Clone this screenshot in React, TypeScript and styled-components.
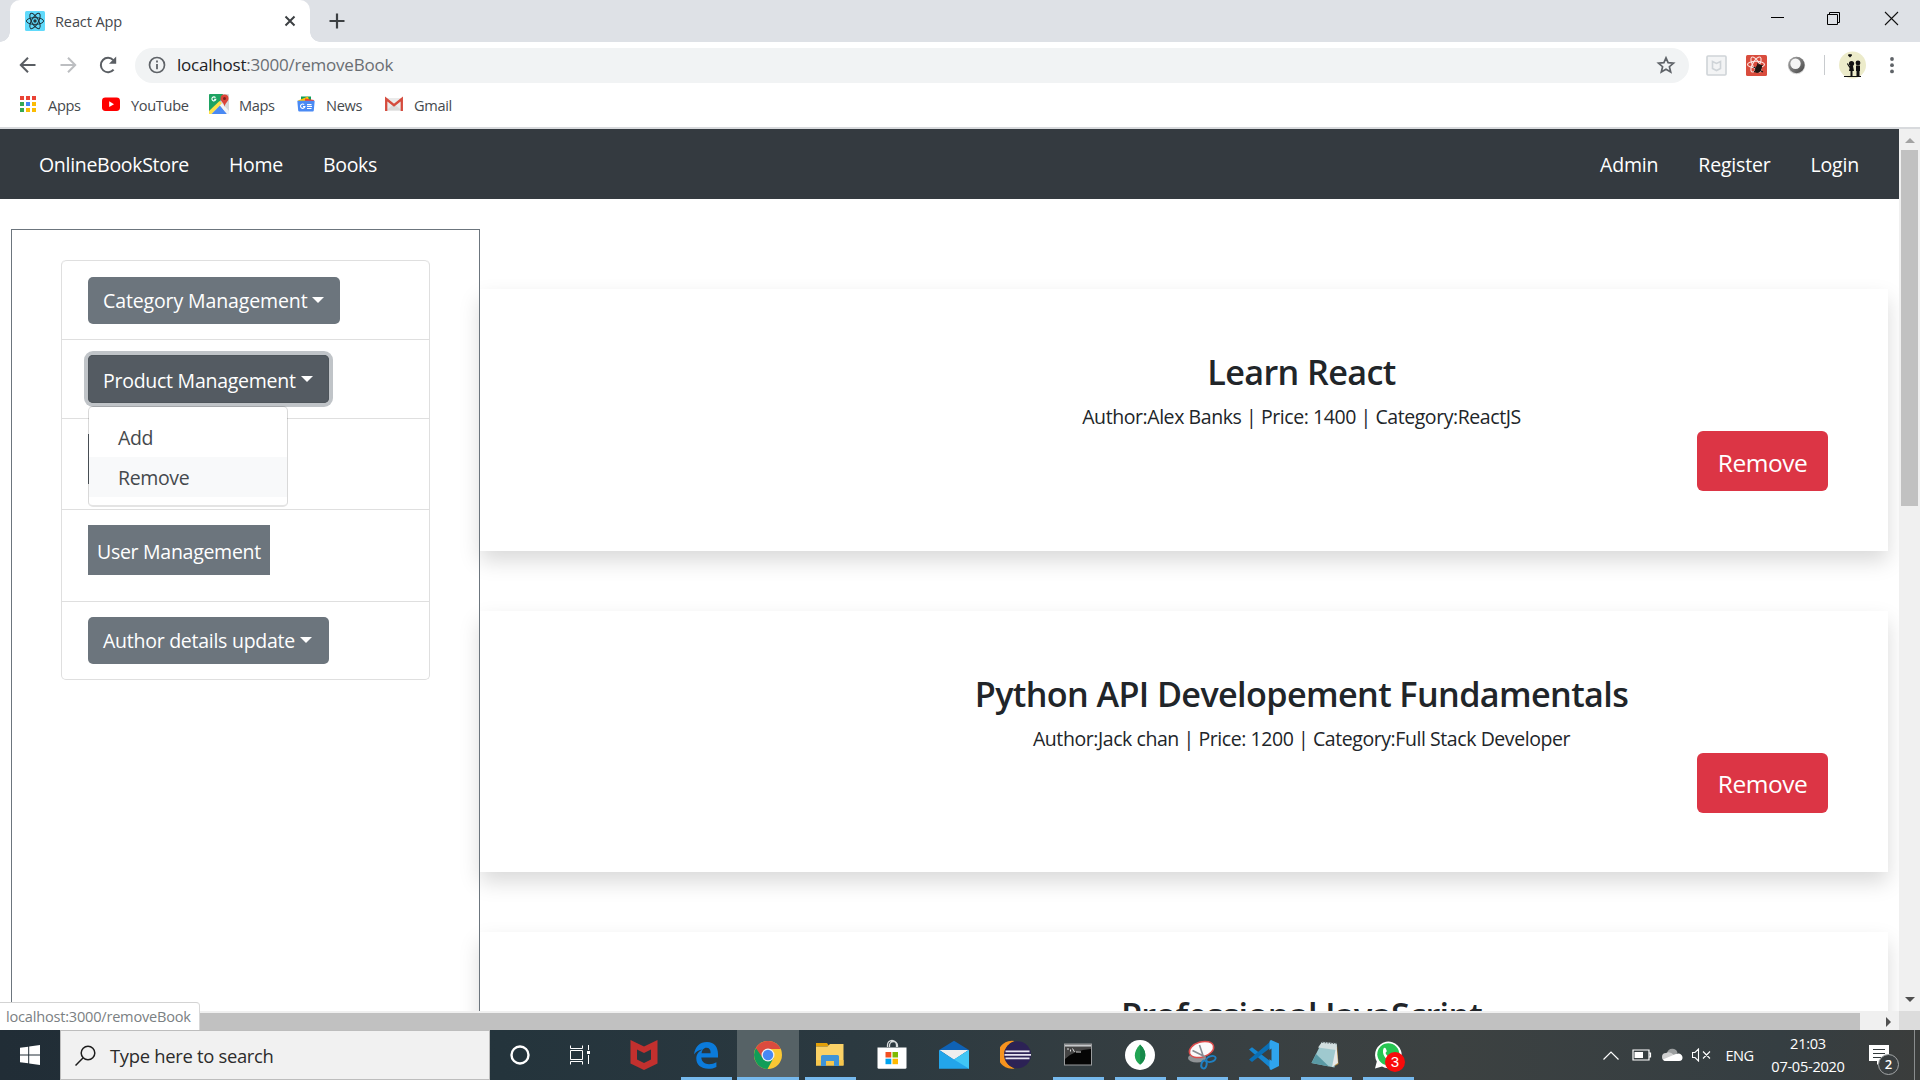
import React from 'react';
import styled, { createGlobalStyle } from 'styled-components';

const Global = createGlobalStyle`
  * { box-sizing: border-box; }
  html, body { margin: 0; padding: 0; overflow: hidden; background: #fff; }
  body { font-family: "Open Sans", "Noto Sans", sans-serif; color: #212529; }
  svg { display: block; flex: none; }
  button { font-family: inherit; }
`;

const Screen = styled.div`
  width: 1920px;
  height: 1080px;
  display: flex;
  flex-direction: column;
  overflow: hidden;
`;

/* Browser chrome */
const TabStrip = styled.div`
  height: 42px;
  flex: none;
  background: #dee1e6;
  display: flex;
  padding-left: 10px;
`;
const Tab = styled.div`
  position: relative;
  width: 300px;
  height: 42px;
  background: #fff;
  border-radius: 10px 10px 0 0;
  display: flex;
  align-items: center;
  padding: 0 14px 0 15px;
  &::before, &::after {
    content: '';
    position: absolute;
    bottom: 0;
    width: 10px;
    height: 10px;
  }
  &::before { left: -10px; background: radial-gradient(circle at 0 0, #dee1e6 9.5px, #fff 10px); }
  &::after { right: -10px; background: radial-gradient(circle at 100% 0, #dee1e6 9.5px, #fff 10px); }
`;
const TabTitle = styled.div`
  flex: 1;
  margin-left: 10px;
  font-size: 14.6px;
  line-height: 20px;
  letter-spacing: -0.15px;
  color: #45494d;
`;
const NewTab = styled.div`
  padding: 13px 0 0 19px;
  flex: 1;
`;
const WindowButtons = styled.div`
  display: flex;
  gap: 42px;
  padding: 11px 21px 0 0;
`;
const Toolbar = styled.div`
  height: 46px;
  flex: none;
  display: flex;
  align-items: center;
  padding: 0 17px 0 18px;
`;
const NavIcons = styled.div`
  width: 117px;
  display: flex;
  gap: 20px;
`;
const Omnibox = styled.div`
  width: 1554px;
  height: 35px;
  border-radius: 18px;
  background: #f1f3f4;
  display: flex;
  align-items: center;
  padding: 0 13px;
  margin-right: 17px;
`;
const Url = styled.div`
  flex: 1;
  margin-left: 11px;
  font-size: 17px;
  line-height: 24px;
  letter-spacing: -0.22px;
  color: #6a6e73;
  b { font-weight: 400; color: #202124; }
`;
const Extensions = styled.div`
  display: flex;
  align-items: center;
  gap: 18px;
`;
const ToolSep = styled.div`
  width: 1px;
  height: 20px;
  margin: 0 14px 0 17px;
  background: #c8cbce;
`;
const Bookmarks = styled.div`
  height: 41px;
  flex: none;
  display: flex;
  border-bottom: 2px solid #d8dadd;
  padding: 0 0 7px 18px;
  align-items: center;
`;
const Bookmark = styled.div<{ $w: number; $gap: number }>`
  width: ${p => p.$w}px;
  display: flex;
  align-items: center;
  gap: ${p => p.$gap}px;
  font-size: 14.6px;
  line-height: 20px;
  letter-spacing: -0.35px;
  color: #45494d;
  span { padding-top: 1px; }
`;

/* Page */
const Viewport = styled.div`
  height: 901px;
  flex: none;
  display: grid;
  grid-template-columns: 1899px 21px;
  grid-template-rows: 882px 19px;
  position: relative;
`;
const Page = styled.div`
  overflow: hidden;
  background: #fff;
`;
const NavBar = styled.nav`
  height: 70px;
  background: #343a40;
  display: flex;
  justify-content: space-between;
  align-items: center;
  padding: 2px 40px 0 39px;
`;
const NavGroup = styled.div<{ $track: number }>`
  display: flex;
  gap: 40px;
  letter-spacing: ${p => p.$track}px;
`;
const NavLink = styled.a`
  color: #fff;
  font-size: 19.5px;
  line-height: 30px;
`;
const Columns = styled.div`
  display: flex;
  padding: 30px 11px 0 11px;
`;
const Sidebar = styled.aside`
  width: 469px;
  height: 1200px;
  flex: none;
  border: 1px solid #6c757d;
  padding: 30px 49px;
  position: relative;
  z-index: 1;
`;
const ListGroup = styled.ul`
  margin: 0;
  padding: 0;
  list-style: none;
  width: 369px;
  border: 1px solid #dfdfdf;
  border-top: 0;
  border-radius: 5px;
`;
const ListItem = styled.li<{ $h: number; $pad?: number }>`
  position: relative;
  height: ${p => p.$h}px;
  padding: ${p => p.$pad ?? 15}px 0 0 26px;
  border-top: 1px solid #dfdfdf;
  &:first-child { border-radius: 5px 5px 0 0; }
`;
const Toggle = styled.button<{ $w: number; $track: number; $open?: boolean }>`
  display: flex;
  align-items: center;
  width: ${p => p.$w}px;
  height: ${p => (p.$open ? 48 : 47)}px;
  padding: ${p => (p.$open ? 2 : 0)}px 0 0 15px;
  border: 0;
  border-radius: 5px;
  background: ${p => (p.$open ? '#545b62' : '#6c757d')};
  box-shadow: ${p => (p.$open ? 'inset 0 0 0 1px #4e555b, 0 0 0 4px #c0c4c8' : 'none')};
  color: #fff;
  font-size: 19.5px;
  letter-spacing: ${p => p.$track}px;
  white-space: nowrap;
  &::after {
    content: '';
    margin: -2px 0 0 5px;
    border: 6px solid transparent;
    border-top-color: #fff;
    border-bottom: 0;
  }
`;
const Block = styled.button<{ $dark?: boolean }>`
  display: block;
  width: 182px;
  height: 50px;
  padding: 2px 0 0 9px;
  border: 0;
  text-align: left;
  background: ${p => (p.$dark ? '#545b62' : '#6c757d')};
  color: #fff;
  font-size: 19.5px;
  letter-spacing: -0.28px;
  white-space: nowrap;
`;
const Menu = styled.div`
  position: absolute;
  z-index: 2;
  top: 66px;
  left: 26px;
  width: 200px;
  height: 101px;
  padding: 10px 0;
  background: #fff;
  background-clip: padding-box;
  border: 1px solid rgba(0, 0, 0, 0.15);
  border-bottom: 2px solid #e4e4e4;
  border-radius: 5px;
`;
const MenuItem = styled.div<{ $active?: boolean }>`
  height: 40px;
  padding-left: 29px;
  line-height: 41px;
  font-size: 19.5px;
  letter-spacing: -0.35px;
  color: #45494d;
  background: ${p => (p.$active ? '#f8f9fa' : 'transparent')};
`;
const Books = styled.main`
  flex: 1;
  padding-top: 60px;
`;
const Card = styled.article`
  height: 261.6px;
  margin-bottom: 60px;
  padding: 60px 60px 60px 295px;
  background: #fff;
  box-shadow: 0 10px 20px rgba(0, 0, 0, 0.15);
  text-align: center;
`;
const BookTitle = styled.h3`
  margin: 0 0 8px;
  font-size: 34.2px;
  line-height: 45px;
  font-weight: 550;
  letter-spacing: -0.62px;
`;
const BookMeta = styled.p`
  margin: 0;
  height: 29px;
  font-size: 19.5px;
  line-height: 30px;
  letter-spacing: -0.43px;
`;
const RemoveRow = styled.div`
  display: flex;
  justify-content: flex-end;
`;
const RemoveButton = styled.button`
  width: 131px;
  height: 60px;
  padding: 2px 0 0;
  border: 0;
  border-radius: 6px;
  background: #dc3545;
  color: #fff;
  font-size: 24.5px;
  letter-spacing: -0.5px;
`;
const VScroll = styled.div`
  background: #f0f0f0;
  display: flex;
  flex-direction: column;
  align-items: center;
  justify-content: space-between;
  padding: 9px 0;
`;
const VThumb = styled.div`
  width: 17px;
  height: 356px;
  margin: 7px 0 auto 0;
  background: #c1c1c1;
`;
const HScroll = styled.div`
  background: #f0f0f0;
  display: flex;
  align-items: center;
  padding: 2px 8px 0 21px;
  justify-content: space-between;
`;
const HThumb = styled.div`
  width: 1839px;
  height: 17px;
  background: #c1c1c1;
`;
const Corner = styled.div`
  background: #dcdcdc;
`;
const StatusBubble = styled.div`
  position: absolute;
  z-index: 3;
  left: 0;
  bottom: 0;
  width: 200px;
  height: 28px;
  padding-left: 6px;
  background: #fff;
  border-top: 1px solid #d3d3d3;
  border-right: 1px solid #d8d8d8;
  border-radius: 0 4px 0 0;
  font-size: 14.6px;
  line-height: 27px;
  letter-spacing: -0.22px;
  color: #7b7f83;
`;

/* Taskbar */
const Taskbar = styled.footer`
  height: 50px;
  flex: none;
  display: flex;
  background: linear-gradient(90deg, #212d36 0, #24343c 500px, #2b3940 850px, #394042 1250px, #3c4141 1450px, #353e42 1780px, #3b3d3c 1920px);
`;
const Cell = styled.div<{ $w: number; $active?: boolean; $line?: boolean }>`
  width: ${p => p.$w}px;
  flex: none;
  display: flex;
  align-items: center;
  justify-content: center;
  background: ${p => (p.$active ? '#566266' : 'transparent')};
  background-image: ${p => (p.$line ? 'linear-gradient(#76b9ed, #76b9ed)' : 'none')};
  background-size: ${p => (p.$active ? '100%' : '51px')} 3px;
  background-position: center bottom;
  background-repeat: no-repeat;
`;
const Search = styled.div`
  width: 430px;
  flex: none;
  margin-right: 1px;
  background: #f1f1f1;
  border: 1px solid #bdbdbd;
  display: flex;
  align-items: center;
  padding-left: 14px;
  gap: 14px;
  font-size: 18.4px;
  letter-spacing: -0.3px;
  color: #2b2b2b;
`;
const Pinned = styled.div`
  display: flex;
  flex: 1;
  padding-left: 2px;
`;
const Tray = styled.div`
  display: flex;
  align-items: center;
  color: #fff;
  font-size: 14.6px;
`;
const Lang = styled.div`
  width: 49px;
  text-align: center;
  letter-spacing: -0.5px;
`;
const Clock = styled.div`
  width: 88px;
  text-align: center;
  line-height: 23px;
  letter-spacing: -0.28px;
`;
const Notice = styled.div`
  position: relative;
  width: 62px;
  height: 50px;
  padding: 15px 0 0 17px;
`;
const Count = styled.div`
  position: absolute;
  left: 26px;
  top: 24px;
  width: 21px;
  height: 21px;
  border-radius: 50%;
  border: 1px solid #a4a7a8;
  background: #3a3f41;
  font-size: 13px;
  font-weight: 600;
  line-height: 19px;
  text-align: center;
`;
const DesktopEdge = styled.div`
  width: 6px;
  height: 50px;
  border-left: 1px solid #8a8d8e;
`;
const BadgeHost = styled.div`
  position: relative;
`;
const Badge = styled.div`
  position: absolute;
  left: 13px;
  top: 13px;
  width: 20px;
  height: 20px;
  border-radius: 50%;
  background: #f90b0b;
  color: #fff;
  font: 15px/20px "Liberation Sans", Arial, sans-serif;
  text-align: center;
`;

const ReactLogo = () => (
  <svg width="20" height="20" viewBox="0 0 20 20">
    <rect width="20" height="20" rx="1.5" fill="#61dafb" />
    <g fill="none" stroke="#20333a" strokeWidth="1">
      {[0, 60, 120].map(a => <ellipse key={a} cx="10" cy="10" rx="8.6" ry="3.4" transform={`rotate(${a} 10 10)`} />)}
    </g>
    <circle cx="10" cy="10" r="1.7" fill="#20333a" />
  </svg>
);

const AppsIcon = () => {
  const c = ['#ea4335', '#ea4335', '#ea4335', '#34a853', '#4285f4', '#fbbc04', '#34a853', '#fbbc04', '#fbbc04'];
  return (
    <svg width="20" height="20" viewBox="0 0 20 20">
      {c.map((f, i) => <rect key={i} x={2 + (i % 3) * 6} y={2 + Math.floor(i / 3) * 6} width="4" height="4" fill={f} />)}
    </svg>
  );
};
const YouTubeIcon = () => (
  <svg width="18" height="20" viewBox="0 0 18 20">
    <rect y="3.5" width="18" height="13.4" rx="3.4" fill="#f00" />
    <path d="M7.2 7.3 12 10.2 7.2 13z" fill="#fff" />
  </svg>
);
const MapsIcon = () => (
  <svg width="20" height="20" viewBox="0 0 20 20">
    <rect width="20" height="20" rx="1" fill="#d8d8d8" />
    <path d="M0 1Q0 0 1 0H14L11 8 0 19z" fill="#1ea362" />
    <path d="M0 17 10.500 7 13 9.300 2.600 20H0z" fill="#ffe047" />
    <path d="M2.600 20 11 11.400 18 20z" fill="#4a89f3" />
    <path d="M11 11.400 13 9.300 20 17V20H18z" fill="#f4f4f4" />
    <path d="M15.500 0.500a4 4 0 0 1 4 4c0 3-3.200 4-3.900 8.200C14.900 8.500 11.500 7.500 11.500 4.500a4 4 0 0 1 4-4z" fill="#db4437" />
    <circle cx="15.500" cy="4.400" r="1.500" fill="#7b231e" />
    <path d="M6.500 3.600A2 2 0 1 0 6.900 5.200H5" fill="none" stroke="#fff" strokeWidth="1.100" />
  </svg>
);
const NewsIcon = () => (
  <svg width="18" height="20" viewBox="0 0 18 20">
    <path d="M4 2.500H14V8H4z" fill="#0c9d58" />
    <path d="M1 6.500 11 2.600 13 9 2 11z" fill="#ffc107" />
    <path d="M8 4.600 17 6 16 10H8z" fill="#ea4335" />
    <path d="M0.300 6.800H17.700L16.800 16.600Q16.700 17.600 15.700 17.600H2.300Q1.300 17.600 1.200 16.600z" fill="#4a8af4" />
    <path d="M7.200 10.500A2.200 2.200 0 1 0 7.900 12.600H6M10 10.600H14.500M10 12.500H15M10 14.500H14.500" fill="none" stroke="#fff" strokeWidth="1.100" />
  </svg>
);
const GmailIcon = () => (
  <svg width="18" height="20" viewBox="0 0 18 20">
    <path d="M1 4H17V16.500H1z" fill="#eaeaea" />
    <path d="M1 16.500 9 10 17 16.500z" fill="#dadada" />
    <path d="M1.200 17V5L9 11.200 16.800 5V17" fill="none" stroke="#d54b3d" strokeWidth="2.300" />
  </svg>
);

const IconBack = ({ color = '#5a5e63', flip = false }: { color?: string; flip?: boolean }) => (
  <svg width="20" height="20" viewBox="0 0 20 20">
    <path transform={flip ? 'matrix(-1 0 0 1 20 0)' : undefined} d="M17.500 10H3M10 2.800 2.800 10 10 17.200" fill="none" stroke={color} strokeWidth="2" />
  </svg>
);

const icon = (children: React.ReactNode) => <svg width="32" height="32" viewBox="0 0 32 32">{children}</svg>;

const McAfee = () => icon(<path d="M2.500 1 16 7.500 29.500 1V24.500L16 31 2.500 24.500zM9 10.500V20.500L16 24 23 20.500V10.500L16 14z" fill="#c2302e" fillRule="evenodd" />);
const Edge = () => icon(<path d="M4 15.500C5 7.500 10 3 17 3 24.500 3 28 8.500 28 15V18.500H11.300C11.600 23 15 25.200 19 25.200 22 25.200 24.200 24.400 26.400 23.200V28C24 29.300 21.300 29.800 18.300 29.800 11 29.800 6.300 25.500 6.300 19.500 6.300 15.400 8.800 12.200 12.600 10.500 9 10.700 6 12.500 4 15.500zM11.600 14.200H20.600C20.700 10.800 19.300 8.800 16.400 8.800 13.700 8.800 12 11.200 11.600 14.200z" fill="#0b7bdb" fillRule="evenodd" />);
const Chrome = () => icon(<>
  <circle cx="16" cy="16" r="14" fill="#fbc834" />
  <path d="M16 16 3.900 9A14 14 0 0 0 15.500 30L21.500 19z" fill="#109d58" />
  <path d="M3.900 9A14 14 0 0 1 28.600 10H16L10 18z" fill="#dc4b3e" />
  <circle cx="16" cy="16" r="6.500" fill="#f1f1f1" />
  <circle cx="16" cy="16" r="5.200" fill="#4788f4" />
</>);
const Folder = () => icon(<>
  <path d="M2 4H13L15.500 7.500H2z" fill="#e3a008" />
  <path d="M2 7.500H13.500L16 5H29.500V26.500H2z" fill="#fbd267" />
  <path d="M2 21H29.500V26.500H2z" fill="#f7c64c" />
  <path d="M7 27V17.500Q7 16 8.500 16H23.500Q25 16 25 17.500V27H20V22H12V27z" fill="#3f94d8" />
</>);
const Store = () => icon(<>
  <path d="M11.500 8V6a4.500 4.500 0 0 1 9 0V8M13.500 8V6.500a4 4 0 0 1 8 0V8" fill="none" stroke="#d9dcdd" strokeWidth="1.300" />
  <path d="M1.500 8.500H30.500V28.500Q30.500 29.800 29.200 29.800H2.800Q1.500 29.800 1.500 28.500z" fill="#fff" />
  <path d="M9.500 13H15.300V18.500H9.500z" fill="#f25022" /><path d="M16.500 13H22V18.500H16.500z" fill="#7fba00" />
  <path d="M9.500 19.700H15.300V25.200H9.500z" fill="#00a4ef" /><path d="M16.500 19.700H22V25.200H16.500z" fill="#ffb900" />
</>);
const Mail = () => icon(<>
  <path d="M1 11 16 1.800 31 11V14H1z" fill="#0f62b5" />
  <path d="M1.500 11H30.500L16 21z" fill="#eee" />
  <path d="M1 11 16 20.500 31 11V29.800H1z" fill="#23a5ea" />
  <path d="M16 20.500 31 11V29.800z" fill="#40c6f5" />
</>);
const Eclipse = () => icon(<>
  <path d="M14.500 2A14 14 0 1 0 14.500 29.500 14.500 14.500 0 0 1 14.500 2z" fill="#f7941e" />
  <circle cx="17.500" cy="15.800" r="13.500" fill="#2c2255" />
  <path d="M5.500 12.400H29.500M4.500 15.900H31M5.500 19.400H29.500" stroke="#e9e6f2" strokeWidth="1.900" />
</>);
const Cmd = () => icon(<>
  <rect x="2.500" y="5" width="27" height="21" fill="#050505" stroke="#9a9c9e" />
  <rect x="3" y="5.500" width="26" height="2.200" fill="#c7c9cb" />
  <path d="M3 8H29V10Q12 11 3 20z" fill="#444" />
  <path d="M5 10H7M8.500 10.500V12.500M10.500 9.500 12.500 13M14 13H19" stroke="#ddd" strokeWidth="1" />
</>);
const Mongo = () => icon(<>
  <circle cx="16" cy="16" r="15" fill="#fff" />
  <path d="M16 5.500C20 9.500 21.300 12.500 21.300 16.500 21.300 20.500 19 23.500 16.500 25.500H15.700C13 23.500 10.800 20.500 10.800 16.500 10.800 12.500 12.500 9.500 16 5.500z" fill="#21a453" />
  <path d="M16 5.500C20 9.500 21.300 12.500 21.300 16.500 21.300 20.500 19 23.500 16.300 25.500z" fill="#16894a" />
</>);
const Snip = () => icon(<>
  <ellipse cx="11" cy="19" rx="9" ry="4.500" fill="#8f9396" />
  <ellipse cx="15.500" cy="10.500" rx="12.500" ry="7.500" transform="rotate(-17 15.500 10.500)" fill="#fafafa" stroke="#dc4c4c" strokeWidth="1.500" />
  <path d="M6.500 11.500 19.500 18M13.500 6 17.500 18" stroke="#858b91" strokeWidth="1.600" />
  <g fill="none" stroke="#1f80c2" strokeWidth="1.900"><ellipse cx="25" cy="20" rx="4.800" ry="2.800" transform="rotate(-18 25 20)" /><ellipse cx="18" cy="25.500" rx="2.600" ry="4" transform="rotate(15 18 25.500)" /></g>
</>);
const VSCode = () => icon(<>
  <path d="M1 10.500 4 8.300 24 23.500V30.500z" fill="#1686d0" />
  <path d="M1 20.500 4 22.900 24 7.500V1.200z" fill="#0a6fb5" />
  <path d="M23 1 31 4.500V27L23 31Q21.500 30.500 21.500 29V3Q21.500 1.300 23 1z" fill="#2fa4ee" />
  <path d="M23.500 9.500V21.700L15.500 15.700z" fill="#3a4144" />
</>);
const Notepad = () => icon(<>
  <path d="M27 6 28.500 25 25 27z" fill="#b98e3e" />
  <path d="M12 3 27 4.500 24.500 28.500 1.500 24z" fill="#9fc9cf" />
  <path d="M12 3 27 4.500 26 11 8 8.500z" fill="#d2dfe0" />
  <path d="M1.500 24 6 15 19 27.500z" fill="#5a9aa5" />
  <path d="M26.500 6 28 24 22 28z" fill="#e7e9e8" />
  <path d="M12 3.200 27 4.600" stroke="#60686c" strokeWidth="1.500" strokeDasharray="1.500 1.200" />
</>);
const WhatsApp = () => (
  <BadgeHost>
    {icon(<>
      <path d="M3 29.500 4.800 22.500A13.300 13.300 0 1 1 10 27.600z" fill="#fff" />
      <circle cx="16.300" cy="15.300" r="11" fill="#27c552" />
      <path d="M11.500 9.500C12.500 8.300 13.500 8.700 14 10L14.800 12C14.800 12.800 13.800 13.400 13.500 14 14.500 16.500 16.500 18 18.500 18.800L20 17.500 23.500 19.500C23 22 20.500 22.500 18.500 22 13.500 20.800 9.500 15 11.500 9.500z" fill="#fff" />
    </>)}
    <Badge>3</Badge>
  </BadgeHost>
);

const apps: { el: React.ReactNode; line?: boolean; active?: boolean }[] = [
  { el: <McAfee /> },
  { el: <Edge />, line: true },
  { el: <Chrome />, line: true, active: true },
  { el: <Folder />, line: true },
  { el: <Store /> },
  { el: <Mail /> },
  { el: <Eclipse /> },
  { el: <Cmd />, line: true },
  { el: <Mongo />, line: true },
  { el: <Snip />, line: true },
  { el: <VSCode />, line: true },
  { el: <Notepad />, line: true },
  { el: <WhatsApp />, line: true },
];

const books: { title: string; meta?: string }[] = [
  { title: 'Learn React', meta: 'Author:Alex Banks | Price: 1400 | Category:ReactJS' },
  { title: 'Python API Developement Fundamentals', meta: 'Author:Jack chan | Price: 1200 | Category:Full Stack Developer' },
  { title: 'Professional JavaScript' },
];

export default function App() {
  return (
    <Screen>
      <Global />
      <TabStrip>
        <Tab>
          <ReactLogo />
          <TabTitle>React App</TabTitle>
          <svg width="12" height="12" viewBox="0 0 12 12"><path d="M1.500 1.500 10.500 10.500M10.500 1.500 1.500 10.500" stroke="#3c4043" strokeWidth="2" /></svg>
        </Tab>
        <NewTab>
          <svg width="16" height="16" viewBox="0 0 16 16"><path d="M8 0.500V15.500M0.500 8H15.500" stroke="#3c4043" strokeWidth="2.200" /></svg>
        </NewTab>
        <WindowButtons>
          <svg width="15" height="15" viewBox="0 0 15 15"><path d="M1 6.500H14" stroke="#000" /></svg>
          <svg width="15" height="15" viewBox="0 0 15 15"><path d="M0.500 3.500H10.500V13.500H0.500zM2.500 3V1.500H12.500V11.500H11" fill="none" stroke="#000" /></svg>
          <svg width="15" height="15" viewBox="0 0 15 15"><path d="M1 1 14 14M14 1 1 14" stroke="#111" strokeWidth="1.100" /></svg>
        </WindowButtons>
      </TabStrip>
      <Toolbar>
        <NavIcons>
          <IconBack />
          <IconBack color="#bcbec1" flip />
          <svg width="20" height="20" viewBox="0 0 20 20">
            <path d="M15.600 14.600A7.200 7.200 0 1 1 15.300 5.100" fill="none" stroke="#5a5e63" strokeWidth="2" />
            <path d="M18.200 1.500V8.700H11z" fill="#5a5e63" />
          </svg>
        </NavIcons>
        <Omnibox>
          <svg width="18" height="18" viewBox="0 0 18 18">
            <circle cx="9" cy="9" r="7.500" fill="none" stroke="#5f6368" strokeWidth="1.700" />
            <path d="M9 4.600V6.400M9 8V13.300" stroke="#5f6368" strokeWidth="1.800" />
          </svg>
          <Url><b>localhost</b>:3000/removeBook</Url>
          <svg width="20" height="20" viewBox="0 0 20 20">
            <path d="M10 2.800 12.100 7.700 17.500 8.200 13.400 11.700 14.700 17 10 14.200 5.300 17 6.600 11.700 2.500 8.200 7.900 7.700z" fill="none" stroke="#5f6368" strokeWidth="1.700" />
          </svg>
        </Omnibox>
        <Extensions>
          <svg width="21" height="21" viewBox="0 0 21 21">
            <rect x="1" y="1" width="19" height="19" rx="1" fill="#f3f4f5" stroke="#cfd4d8" strokeWidth="1.600" />
            <path d="M6.500 6.500 10.500 8.400 14.500 6.500V13.500L10.500 15.500 6.500 13.500z" fill="none" stroke="#cfd4d8" strokeWidth="1.600" />
          </svg>
          <svg width="22" height="21" viewBox="0 0 22 21">
            <rect width="21" height="21" x="1" rx="1.500" fill="#d94c3d" />
            <g fill="none" stroke="#fbe3df" strokeWidth="1.100">
              {[0, 60, 120].map(a => <ellipse key={a} cx="11" cy="9.500" rx="8.500" ry="3.300" transform={`rotate(${a} 11 9.500)`} />)}
            </g>
            <ellipse cx="13.500" cy="13.500" rx="3" ry="4.500" transform="rotate(25 13.500 13.500)" fill="#1e1512" />
            <path d="M8.500 12 18 17M9 17 17.500 10M13 8 11 18" stroke="#1e1512" strokeWidth="1.100" />
          </svg>
          <svg width="22" height="22" viewBox="0 0 22 22">
            <defs><linearGradient id="ring" x1="0" y1="0" x2="1" y2="1"><stop offset="0" stopColor="#aaa" /><stop offset="1" stopColor="#444" /></linearGradient></defs>
            <circle cx="11.500" cy="11.500" r="8.700" fill="#d9d9d9" />
            <circle cx="11.500" cy="11" r="8.200" fill="url(#ring)" />
            <circle cx="10.500" cy="9.800" r="5.200" fill="#f6f6f6" />
          </svg>
        </Extensions>
        <ToolSep />
        <svg width="27" height="28" viewBox="0 0 27 28">
          <circle cx="13.500" cy="14" r="13.500" fill="#ecebca" />
          <path d="M11 6.500 9 4.500Q9 3 10.200 3 11 3 11 3.700 11 3 12 3 13 3 13 4.500zM5 25H22V26H5z" fill="#111" />
          <circle cx="12.500" cy="12.500" r="2.600" fill="#111" /><circle cx="19" cy="12" r="2.400" fill="#111" />
          <path d="M11 15H14L15 20H13.500V25H11.500V20H10zM17 14.500H21V20H20.500V25H17.500V20H17zM8.500 12 11.500 16 10.500 17 8 13z" fill="#111" />
        </svg>
        <svg width="36" height="20" viewBox="0 0 36 20">
          <g fill="#5f6368"><circle cx="26" cy="4" r="1.900" /><circle cx="26" cy="10.200" r="1.900" /><circle cx="26" cy="16.400" r="1.900" /></g>
        </svg>
      </Toolbar>
      <Bookmarks>
        <Bookmark $w={84} $gap={10}><AppsIcon /><span>Apps</span></Bookmark>
        <Bookmark $w={107} $gap={11}><YouTubeIcon /><span>YouTube</span></Bookmark>
        <Bookmark $w={88} $gap={10}><MapsIcon /><span>Maps</span></Bookmark>
        <Bookmark $w={88} $gap={11}><NewsIcon /><span>News</span></Bookmark>
        <Bookmark $w={90} $gap={11}><GmailIcon /><span>Gmail</span></Bookmark>
      </Bookmarks>

      <Viewport>
        <Page>
          <NavBar>
            <NavGroup $track={-0.3}><NavLink>OnlineBookStore</NavLink><NavLink>Home</NavLink><NavLink>Books</NavLink></NavGroup>
            <NavGroup $track={-0.18}><NavLink>Admin</NavLink><NavLink>Register</NavLink><NavLink>Login</NavLink></NavGroup>
          </NavBar>
          <Columns>
            <Sidebar>
              <ListGroup>
                <ListItem $h={79} $pad={16}><Toggle $w={252} $track={-0.12}>Category Management</Toggle></ListItem>
                <ListItem $h={79}>
                  <Toggle $w={241} $track={-0.26} $open>Product Management</Toggle>
                  <Menu>
                    <MenuItem>Add</MenuItem>
                    <MenuItem $active>Remove</MenuItem>
                  </Menu>
                </ListItem>
                <ListItem $h={91}><Block $dark /></ListItem>
                <ListItem $h={92}><Block>User Management</Block></ListItem>
                <ListItem $h={78}><Toggle $w={241} $track={-0.26}>Author details update</Toggle></ListItem>
              </ListGroup>
            </Sidebar>
            <Books>
              {books.map(b => (
                <Card key={b.title}>
                  <BookTitle>{b.title}</BookTitle>
                  {b.meta && (
                    <>
                      <BookMeta>{b.meta}</BookMeta>
                      <RemoveRow><RemoveButton>Remove</RemoveButton></RemoveRow>
                    </>
                  )}
                </Card>
              ))}
            </Books>
          </Columns>
        </Page>
        <VScroll>
          <svg width="10" height="5" viewBox="0 0 10 5"><path d="M5 0 10 5H0z" fill="#a3a3a3" /></svg>
          <VThumb />
          <svg width="10" height="5" viewBox="0 0 10 5"><path d="M5 5 10 0H0z" fill="#505050" /></svg>
        </VScroll>
        <HScroll>
          <HThumb />
          <svg width="5" height="10" viewBox="0 0 5 10"><path d="M5 5 0 10V0z" fill="#505050" /></svg>
        </HScroll>
        <Corner />
        <StatusBubble>localhost:3000/removeBook</StatusBubble>
      </Viewport>

      <Taskbar>
        <Cell $w={60}>
          <svg width="20" height="20" viewBox="0 0 20 20"><path d="M0 2.800 8.200 1.700V9.500H0zM9.200 1.500 20 0V9.500H9.200zM0 10.500H8.200V18.300L0 17.200zM9.200 10.500H20V20L9.200 18.500z" fill="#fff" /></svg>
        </Cell>
        <Search>
          <svg width="21" height="21" viewBox="0 0 21 21"><g fill="none" stroke="#1c1c1c" strokeWidth="1.500"><circle cx="13" cy="8" r="6.800" /><path d="M8.200 12.800 0.500 20.500" /></g></svg>
          Type here to search
        </Search>
        <Cell $w={58}><svg width="20" height="20" viewBox="0 0 20 20"><circle cx="10" cy="10" r="8.500" fill="none" stroke="#fff" strokeWidth="2.400" /></svg></Cell>
        <Cell $w={62}>
          <svg width="20" height="20" viewBox="0 0 20 20"><path d="M0.500 0.500V3.500H12.500V0.500M0.500 5.500H12.500V14.500H0.500zM0.500 19.500V16.500H12.500V19.500M18.500 0V5M18.500 10V19" fill="none" stroke="#fff" /><path d="M17 6H20V9H17z" fill="#fff" /></svg>
        </Cell>
        <Pinned>
          {apps.map((a, i) => <Cell key={i} $w={62} $line={a.line} $active={a.active}>{a.el}</Cell>)}
        </Pinned>
        <Tray>
          <Cell $w={34}><svg width="16" height="9" viewBox="0 0 16 9"><path d="M0.500 8.500 8 1 15.500 8.500" fill="none" stroke="#fff" strokeWidth="1.200" /></svg></Cell>
          <Cell $w={28}><svg width="20" height="12" viewBox="0 0 20 12"><path d="M1 1H17V11H1zM17.500 4H18.500V8H17.500" fill="none" stroke="#fff" strokeWidth="1.200" /><path d="M2.500 3H11V9H2.500z" fill="#fff" /></svg></Cell>
          <Cell $w={32}><svg width="21" height="14" viewBox="0 0 21 14"><path d="M5 5A5.500 5.500 0 0 1 15.500 4.500L12 9H5z" fill="#9b9e9f" /><path d="M4 13A4 4 0 0 1 4 5Q8 3 12 7L14 13z" fill="#cfd0d0" /><path d="M1 11.500 12.500 6.500Q19 3.500 20.500 9 20.800 13 17 13H4Q2 13 1 11.500z" fill="#fff" /></svg></Cell>
          <Cell $w={27}><svg width="19" height="14" viewBox="0 0 19 14"><path d="M0.500 4.500H3L6.500 1V13L3 9.500H0.500zM11 3.500 18 10.500M18 3.500 11 10.500" fill="none" stroke="#fff" strokeWidth="1.100" /></svg></Cell>
          <Lang>ENG</Lang>
          <Clock><div>21:03</div><div>07-05-2020</div></Clock>
          <Notice>
            <svg width="20" height="20" viewBox="0 0 20 20"><path d="M0 0H20V16H12L8 20V16H0z" fill="#fff" /><path d="M4 4.500H16M4 8.500H16M4 12.500H12" stroke="#333a3c" /></svg>
            <Count>2</Count>
          </Notice>
          <DesktopEdge />
        </Tray>
      </Taskbar>
    </Screen>
  );
}
